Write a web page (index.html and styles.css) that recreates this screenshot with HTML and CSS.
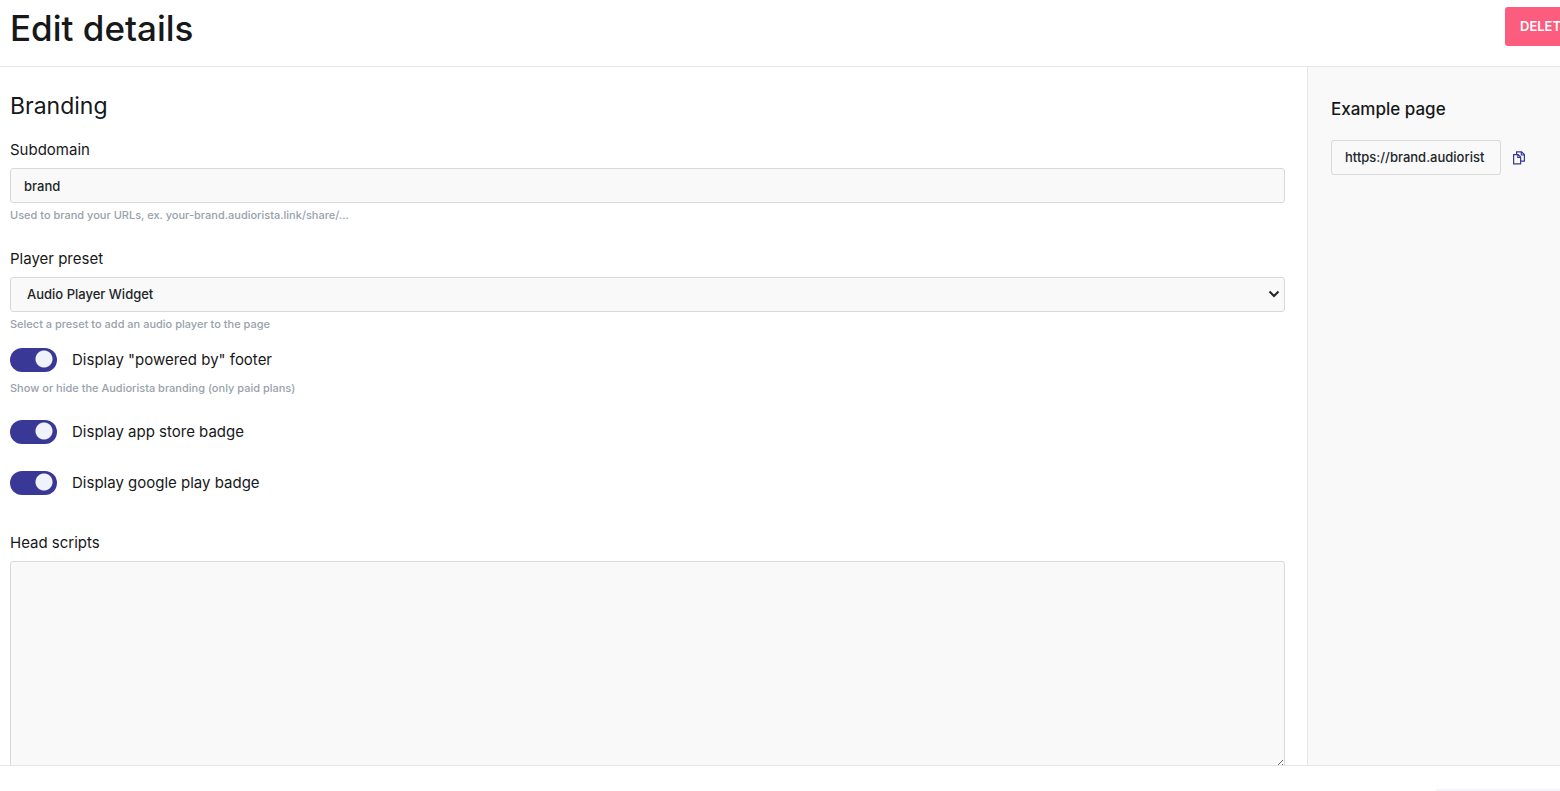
FILE: index.html
```html
<!DOCTYPE html>
<html lang="en">
<head>
<meta charset="utf-8">
<title>Edit details</title>
<link rel="stylesheet" href="styles.css">
</head>
<body>
<div class="app">
  <header class="header">
    <h1 class="title">Edit details</h1>
    <div class="header-actions"><button class="delete" type="button">DELETE</button></div>
  </header>
  <div class="content">
    <main class="form">
      <h2 class="section-title">Branding</h2>
      <div class="field">
        <label class="label" for="subdomain">Subdomain</label>
        <input class="control" id="subdomain" type="text" value="brand">
        <p class="help">Used to brand your URLs, ex. your-brand.audiorista.link/share/...</p>
      </div>
      <div class="field">
        <label class="label" for="preset">Player preset</label>
        <div class="select-wrap">
          <select class="control select" id="preset"><option>Audio Player Widget</option></select>
          <svg class="chevron" viewBox="0 0 12 8" aria-hidden="true"><path d="M1.500 1.500 6 6l4.500-4.500"/></svg>
        </div>
        <p class="help">Select a preset to add an audio player to the page</p>
      </div>
      <div class="toggles">
        <div>
          <label class="toggle"><input class="switch" type="checkbox" checked>Display "powered by" footer</label>
          <p class="help help-toggle">Show or hide the Audiorista branding (only paid plans)</p>
        </div>
        <label class="toggle"><input class="switch" type="checkbox" checked>Display app store badge</label>
        <label class="toggle"><input class="switch" type="checkbox" checked>Display google play badge</label>
      </div>
      <div class="field">
        <label class="label" for="scripts">Head scripts</label>
        <textarea class="control area" id="scripts"></textarea>
      </div>
    </main>
    <aside class="side">
      <h3 class="side-title">Example page</h3>
      <div class="url-row">
        <input class="control url" type="text" aria-label="Example page URL" value="https://brand.audiorist">
        <button class="copy" type="button" aria-label="Copy URL">
          <svg viewBox="0 0 12 14" width="12" height="14" aria-hidden="true"><path d="M.6 3.600h4.500l2.500 2.500v6.800h-7zM4.800 3.800v2.700h2.700M3.600 3V.800h5l2.800 2.800v6.600H8.200M8.300 1v3h3"/></svg>
        </button>
      </div>
    </aside>
  </div>
  <footer class="footer"><button class="save" type="button" aria-label="Save"></button></footer>
</div>
</body>
</html>
```

FILE: styles.css
```css
* {
  box-sizing: border-box;
}

body {
  margin: 0;
  background: #fff;
  color: #16181a;
  font-family: Inter, sans-serif;
  font-size: 15px;
}

h1, h2, h3, p {
  margin: 0;
  font-weight: 400;
}

.app {
  display: flex;
  flex-direction: column;
  height: 100vh;
  overflow: hidden;
}

.header {
  display: flex;
  justify-content: space-between;
  flex: none;
  padding: 7px 0 20px 10px;
  border-bottom: 1px solid #e6e6e6;
  overflow: hidden;
}

.title {
  font-size: 35px;
  line-height: 42px;
  height: 39px;
  font-weight: 500;
}

.header-actions {
  width: 55px;
}

.delete {
  height: 39px;
  padding: 0 15px 2px;
  border: 0;
  border-radius: 3px;
  background: #fc5c7d;
  color: #fff;
  font: 600 13px Inter, sans-serif;
}

.content {
  display: flex;
  flex: 1;
  min-height: 0;
  overflow: hidden;
}

.form {
  flex: 1;
  min-width: 0;
  padding: 23px 22px 0 10px;
}

.section-title {
  margin-bottom: 18px;
  font-size: 23px;
  line-height: 32px;
}

.field {
  margin-bottom: 26px;
}

.label {
  display: block;
  margin-bottom: 8px;
  line-height: 20px;
}

.control {
  display: block;
  width: 100%;
  height: 35px;
  padding: 0 13px;
  border: 1px solid #d9d9d9;
  border-radius: 3px;
  background: #f9f9f9;
  color: #212529;
  font: 500 13px Inter, sans-serif;
}

.select-wrap {
  position: relative;
}

.select {
  appearance: none;
  padding: 0 16px 2px;
}

.chevron {
  position: absolute;
  top: 13px;
  right: 5px;
  width: 12px;
  height: 8px;
  fill: none;
  stroke: #212529;
  stroke-width: 2;
  pointer-events: none;
}

.help {
  margin-top: 4px;
  color: #98a2ab;
  font-size: 11px;
  line-height: 16px;
  font-weight: 500;
}

.help-toggle {
  margin: 8px 0 -3px;
}

.toggles {
  display: grid;
  gap: 27px;
  margin: -10px 0 38px;
}

.toggle {
  display: flex;
  align-items: center;
  gap: 15px;
  line-height: 24px;
}

.switch {
  appearance: none;
  width: 47px;
  height: 24px;
  margin: 0;
  border-radius: 12px;
  background: radial-gradient(circle at 34px 11px, #eff2fb 8px, #3a3897 9px);
}

.area {
  height: 208px;
  padding: 10px 13px;
  resize: vertical;
}

.side {
  flex: none;
  width: 253px;
  padding: 30px 23px;
  border-left: 1px solid #e6e6e6;
  background: #f9f9f9;
}

.side-title {
  margin-bottom: 19px;
  font-size: 17px;
  line-height: 24px;
  font-weight: 500;
}

.url-row {
  display: flex;
  align-items: center;
  gap: 12px;
}

.url {
  width: 170px;
  padding-bottom: 2px;
}

.copy {
  display: flex;
  padding: 0;
  border: 0;
  background: none;
}

.copy path {
  fill: none;
  stroke: #3a3897;
  stroke-width: 1.2;
}

.footer {
  display: flex;
  justify-content: flex-end;
  flex: none;
  height: 26px;
  padding-top: 23px;
  border-top: 1px solid #e6e6e6;
  overflow: hidden;
}

.save {
  width: 125px;
  height: 39px;
  border: 0;
  border-radius: 3px 0 0 3px;
  background: #f5f5fc;
}
```
